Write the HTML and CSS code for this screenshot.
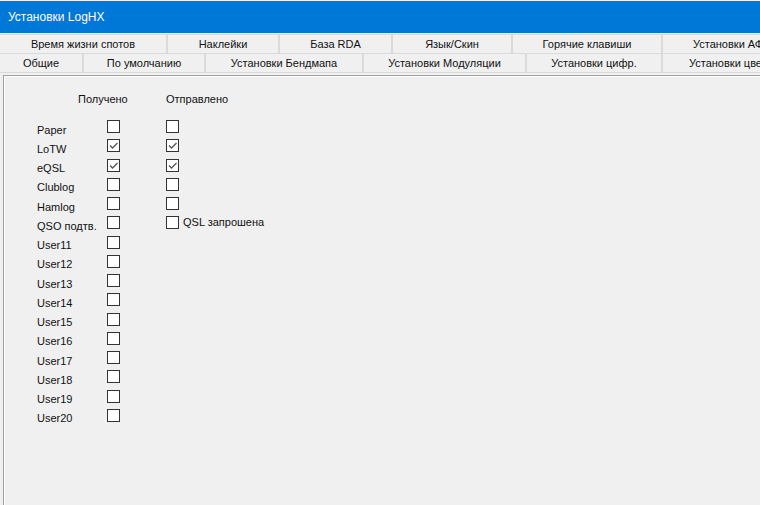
FILE: index.html
```html
<!DOCTYPE html>
<html lang="ru">
<head>
  <meta charset="UTF-8">
  <title>Установки LogHX</title>
  <link rel="stylesheet" href="styles.css">
</head>
<body>
  <div class="titlebar">Установки LogHX</div>

  <div class="tabs">
    <div class="tab-row">
      <div class="tab" style="width:168px">Время жизни спотов</div>
      <div class="tab" style="width:112px">Наклейки</div>
      <div class="tab" style="width:113px">База RDA</div>
      <div class="tab" style="width:120px">Язык/Скин</div>
      <div class="tab" style="width:150px">Горячие клавиши</div>
      <div class="tab tab-cut" style="padding-left:30px">Установки АФУ</div>
    </div>
    <div class="tab-row">
      <div class="tab" style="width:84px">Общие</div>
      <div class="tab" style="width:122px">По умолчанию</div>
      <div class="tab" style="width:158px">Установки Бендмапа</div>
      <div class="tab" style="width:163px">Установки Модуляции</div>
      <div class="tab" style="width:136px">Установки цифр.</div>
      <div class="tab tab-cut" style="padding-left:26px">Установки цвета</div>
    </div>
  </div>

  <div class="panel">
    <div class="heads">
      <span class="head-recv">Получено</span>
      <span class="head-sent">Отправлено</span>
    </div>

    <div class="grid" id="grid"></div>
  </div>

  <script>
    // name, received, sent (null = no sent box), extra caption for sent box
    const rows = [
      ["Paper", false, false],
      ["LoTW", true, true],
      ["eQSL", true, true],
      ["Clublog", false, false],
      ["Hamlog", false, false],
      ["QSO подтв.", false, false, "QSL запрошена"],
      ["User11", false, null],
      ["User12", false, null],
      ["User13", false, null],
      ["User14", false, null],
      ["User15", false, null],
      ["User16", false, null],
      ["User17", false, null],
      ["User18", false, null],
      ["User19", false, null],
      ["User20", false, null]
    ];

    const tick = '<svg width="11" height="11" viewBox="0 0 11 11"><path d="M2 5.5 L4.5 8 L9.5 3" fill="none" stroke="#555" stroke-width="1.3"/></svg>';

    function box(checked) {
      return '<span class="cb">' + (checked ? tick : '') + '</span>';
    }

    const grid = document.getElementById("grid");
    rows.forEach(r => {
      const row = document.createElement("div");
      row.className = "row";
      let html = '<span class="name">' + r[0] + '</span>' + box(r[1]);
      if (r[2] !== null) {
        html += '<span class="sent">' + box(r[2]) + (r[3] ? '<span class="cap">' + r[3] + '</span>' : '') + '</span>';
      }
      row.innerHTML = html;
      grid.appendChild(row);
    });
  </script>
</body>
</html>
```

FILE: styles.css
```css
body {
  margin: 0;
  width: 760px;
  height: 505px;
  overflow: hidden;
  background-color: #f0f0f0;
  font-family: "Liberation Sans", Arial, sans-serif;
  font-size: 11px;
  color: #111;
}

.titlebar {
  height: 32px;
  margin-top: 1px;
  background-color: #0078d7;
  color: #fff;
  font-size: 12px;
  line-height: 32px;
  padding-left: 8px;
  box-sizing: border-box;
  margin-bottom: 1px;
}

.tabs {
  border-top: 1px solid #dadada;
}

.tab-row {
  display: flex;
  height: 18px;
  border-bottom: 1px solid #dadada;
  white-space: nowrap;
}

.tab {
  flex: none;
  line-height: 18px;
  text-align: center;
  border-right: 2px solid #dadada;
  box-sizing: border-box;
}

.tab-cut {
  flex: 1;
  text-align: left;
  border-right: none;
  overflow: hidden;
}

.panel {
  margin: 2px 0 0 3px;
  height: 432px;
  box-sizing: border-box;
  border-top: 1px solid #a0a0a0;
  border-left: 1px solid #a0a0a0;
  box-shadow: inset 1px 1px 0 #fff;
  padding-top: 17px;
}

.heads {
  display: flex;
  line-height: 13px;
  height: 13px;
  margin-bottom: 14px;
}

.head-recv {
  margin-left: 74px;
  width: 88px;
}

.grid {
  padding-left: 33px;
}

.row {
  display: flex;
  align-items: center;
  height: 19.25px;
}

.name {
  width: 70px;
}

.cb {
  width: 13px;
  height: 13px;
  box-sizing: border-box;
  border: 1px solid #333;
  background-color: #fff;
  margin-bottom: 6px;
  display: flex;
  align-items: center;
  justify-content: center;
}

.sent {
  display: flex;
  margin-left: 46px;
}

.cap {
  margin-left: 4px;
  line-height: 13px;
}
```
